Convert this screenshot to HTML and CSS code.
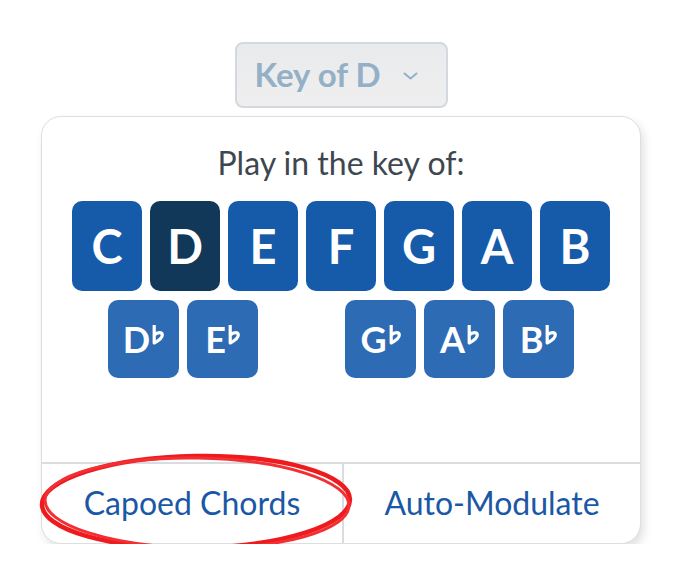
FILE: index.html
```html
<!DOCTYPE html>
<html lang="en">
<head>
    <meta charset="UTF-8">
    <title>Key picker</title>
    <link rel="stylesheet" href="styles.css">
</head>
<body>
    <div class="page">
        <button class="key-toggle">Key of D <span class="chev"><svg width="15" height="8" viewBox="0 0 15 8"><path d="M1.5 1.5 L7.5 6.5 L13.5 1.5" fill="none" stroke="#93b0c6" stroke-width="2" stroke-linecap="round" stroke-linejoin="round"/></svg></span></button>

        <div class="popover">
            <div class="popover-body">
                <div class="prompt">Play in the key of:</div>
                <div class="keys naturals">
                    <div class="key">C</div>
                    <div class="key selected">D</div>
                    <div class="key">E</div>
                    <div class="key">F</div>
                    <div class="key">G</div>
                    <div class="key">A</div>
                    <div class="key">B</div>
                </div>
                <div class="keys flats">
                    <div class="key flat">D<svg class="fl" width="12" height="21" viewBox="0 0 12 21"><path d="M2.2 1 V19 C6 17 10.3 14.5 10.3 11 C10.3 7.8 5.5 7.8 2.2 11" fill="none" stroke="#fff" stroke-width="3.2" stroke-linejoin="round"/></svg></div>
                    <div class="key flat">E<svg class="fl" width="12" height="21" viewBox="0 0 12 21"><path d="M2.2 1 V19 C6 17 10.3 14.5 10.3 11 C10.3 7.8 5.5 7.8 2.2 11" fill="none" stroke="#fff" stroke-width="3.2" stroke-linejoin="round"/></svg></div>
                    <div class="key-gap"></div>
                    <div class="key flat">G<svg class="fl" width="12" height="21" viewBox="0 0 12 21"><path d="M2.2 1 V19 C6 17 10.3 14.5 10.3 11 C10.3 7.8 5.5 7.8 2.2 11" fill="none" stroke="#fff" stroke-width="3.2" stroke-linejoin="round"/></svg></div>
                    <div class="key flat">A<svg class="fl" width="12" height="21" viewBox="0 0 12 21"><path d="M2.2 1 V19 C6 17 10.3 14.5 10.3 11 C10.3 7.8 5.5 7.8 2.2 11" fill="none" stroke="#fff" stroke-width="3.2" stroke-linejoin="round"/></svg></div>
                    <div class="key flat">B<svg class="fl" width="12" height="21" viewBox="0 0 12 21"><path d="M2.2 1 V19 C6 17 10.3 14.5 10.3 11 C10.3 7.8 5.5 7.8 2.2 11" fill="none" stroke="#fff" stroke-width="3.2" stroke-linejoin="round"/></svg></div>
                </div>
            </div>
            <div class="popover-foot">
                <div class="foot-link">Capoed Chords</div>
                <div class="foot-link">Auto-Modulate</div>
            </div>
            <svg class="scribble" width="320" height="104" viewBox="0 0 320 104">
                <ellipse cx="159" cy="52" rx="154" ry="46" fill="none" stroke="#ee1a1d" stroke-width="4.5" transform="rotate(-1 159 52)"/>
                <ellipse cx="160" cy="53" rx="152" ry="45" fill="none" stroke="#f23033" stroke-width="3" transform="rotate(1 160 53)"/>
            </svg>
        </div>
    </div>
</body>
</html>
```

FILE: styles.css
```css
body {
    margin: 0;
    background: #fff;
    font-family: 'Lato', 'Open Sans', sans-serif;
}
.page {
    width: 682px;
    display: flex;
    flex-direction: column;
    align-items: center;
    padding-top: 42px;
}
.key-toggle {
    width: 213px;
    height: 66px;
    box-sizing: border-box;
    background: linear-gradient(#e9eaeb, #efeff0);
    border: 2px solid #d3d9de;
    border-radius: 8px;
    font-family: 'Lato', sans-serif;
    font-weight: bold;
    font-size: 33px;
    color: #93b0c6;
    display: flex;
    align-items: center;
    justify-content: center;
    gap: 22px;
    padding: 0 10px 2px 0;
}
.chev { display: flex; margin-top: 4px; }
.popover {
    position: relative;
    margin-top: 8px;
    width: 600px;
    box-sizing: border-box;
    background: #fff;
    border: 1px solid #dcdee0;
    border-radius: 20px;
    box-shadow: 3px 5px 10px rgba(0, 0, 0, 0.12);
}
.popover-body {
    height: 345px;
    box-sizing: border-box;
    padding-top: 27px;
    display: flex;
    flex-direction: column;
    align-items: center;
}
.prompt {
    font-size: 32px;
    line-height: 38px;
    color: #3d4750;
}
.keys {
    display: flex;
    gap: 8px;
}
.naturals { margin-top: 19px; }
.flats { margin-top: 9px; }
.key {
    width: 70px;
    height: 90px;
    border-radius: 10px;
    background: #165aaa;
    color: #fff;
    font-weight: bold;
    font-size: 47px;
    display: flex;
    align-items: center;
    justify-content: center;
}
.key.selected { background: #113759; }
.key.flat {
    width: 71px;
    height: 78px;
    background: #2d6bb4;
    font-size: 36px;
}
.key-gap { width: 71px; }
.fl {
    flex-shrink: 0;
    margin-left: 2px;
    margin-top: -9px;
}
.popover-foot {
    display: grid;
    grid-template-columns: 300px 1fr;
    border-top: 2px solid #dadcdf;
    height: 79px;
}
.foot-link {
    display: flex;
    align-items: center;
    justify-content: center;
    font-size: 32px;
    color: #1a58a6;
    padding-bottom: 2px;
}
.foot-link + .foot-link { border-left: 2px solid #dadcdf; }
.scribble {
    position: absolute;
    left: -5px;
    top: 333px;
}
```
